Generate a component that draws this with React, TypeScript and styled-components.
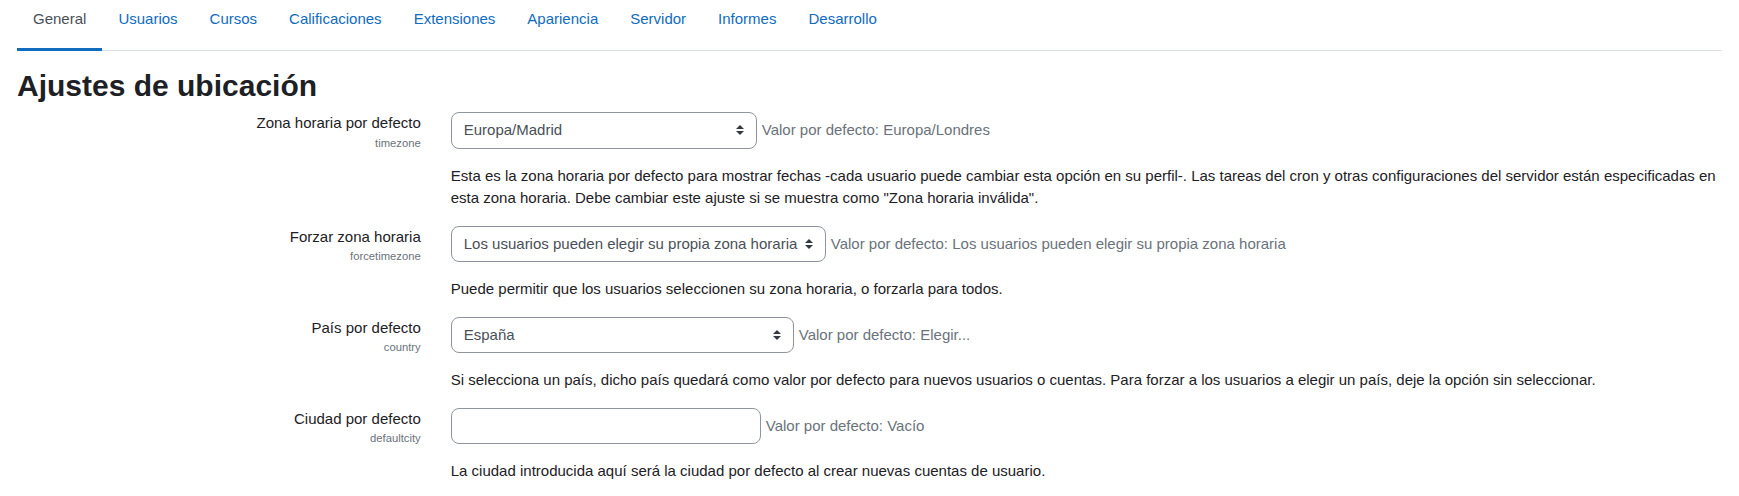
import React from "react";
import styled, { createGlobalStyle } from "styled-components";

const GlobalStyle = createGlobalStyle`
  html, body { margin: 0; padding: 0; background: #fff; }
  body {
    font-family: "Liberation Sans", Arial, sans-serif;
    font-size: 15px;
    line-height: 1.5;
    color: #1d2125;
  }
  * { box-sizing: border-box; }
`;

const Page = styled.div`
  padding: 0 17px;
`;

const Tabs = styled.nav`
  display: flex;
  border-bottom: 1px solid #dee2e6;
  height: 51px;
`;

const Tab = styled.a<{ $active?: boolean }>`
  display: block;
  height: 51px;
  margin-bottom: -1px;
  padding: 8px 16px 0;
  font-size: 15px;
  line-height: 22.5px;
  text-decoration: none;
  color: ${(p) => (p.$active ? "#495057" : "#0f6cbf")};
  border-bottom: 3px solid ${(p) => (p.$active ? "#0f6cbf" : "transparent")};
  cursor: pointer;
`;

const Heading = styled.h2`
  margin: 17px 0 8px;
  font-size: 30px;
  line-height: 1.2;
  font-weight: 700;
  color: #1d2125;
`;

const FormItem = styled.div`
  display: grid;
  grid-template-columns: 25% 75%;
  margin: 0 -15px 16px;
`;

const LabelCol = styled.div`
  padding: 0 15px;
  text-align: right;
`;

const LabelText = styled.label`
  display: block;
  font-size: 15px;
  line-height: 22.5px;
  color: #1d2125;
`;

const ShortName = styled.span`
  display: block;
  font-size: 11.25px;
  line-height: 16.9px;
  color: #6a737b;
`;

const SettingCol = styled.div`
  padding: 0 15px;
`;

const ControlLine = styled.div`
  display: flex;
  align-items: center;
  gap: 5px;
`;

const SelectBox = styled.div<{ $w: number }>`
  display: flex;
  align-items: center;
  justify-content: space-between;
  width: ${(p) => p.$w}px;
  height: 36.5px;
  padding: 0 12px 0 12px;
  border: 1px solid #8f959e;
  border-radius: 8px;
  background: #fff;
  color: #495057;
  font-size: 15px;
  line-height: 22.5px;
  white-space: nowrap;
`;

const TextInput = styled.input<{ $w: number }>`
  width: ${(p) => p.$w}px;
  height: 36.5px;
  padding: 6px 12px;
  border: 1px solid #8f959e;
  border-radius: 8px;
  background: #fff;
  color: #495057;
  font-family: "Liberation Sans", Arial, sans-serif;
  font-size: 15px;
  outline: none;
`;

const DefaultInfo = styled.span`
  color: #6a737b;
  font-size: 15px;
  line-height: 22.5px;
`;

const Description = styled.div`
  margin-top: 16px;
  font-size: 15px;
  line-height: 22.5px;
  color: #1d2125;
`;

const Arrows = () => (
  <svg width="8" height="10" viewBox="0 0 4 5" style={{ flexShrink: 0 }}>
    <path d="M2 0L0 2h4zm0 5L0 3h4z" fill="#343a40" />
  </svg>
);

type Setting = {
  label: string;
  name: string;
  value?: string;
  width: number;
  isInput?: boolean;
  def: string;
  desc: string;
};

const settings: Setting[] = [
  {
    label: "Zona horaria por defecto",
    name: "timezone",
    value: "Europa/Madrid",
    width: 306,
    def: "Valor por defecto: Europa/Londres",
    desc:
      'Esta es la zona horaria por defecto para mostrar fechas -cada usuario puede cambiar esta opción en su perfil-. Las tareas del cron y otras configuraciones del servidor están especificadas en esta zona horaria. Debe cambiar este ajuste si se muestra como "Zona horaria inválida".',
  },
  {
    label: "Forzar zona horaria",
    name: "forcetimezone",
    value: "Los usuarios pueden elegir su propia zona horaria",
    width: 375,
    def: "Valor por defecto: Los usuarios pueden elegir su propia zona horaria",
    desc: "Puede permitir que los usuarios seleccionen su zona horaria, o forzarla para todos.",
  },
  {
    label: "País por defecto",
    name: "country",
    value: "España",
    width: 343,
    def: "Valor por defecto: Elegir...",
    desc:
      "Si selecciona un país, dicho país quedará como valor por defecto para nuevos usuarios o cuentas. Para forzar a los usuarios a elegir un país, deje la opción sin seleccionar.",
  },
  {
    label: "Ciudad por defecto",
    name: "defaultcity",
    width: 310,
    isInput: true,
    def: "Valor por defecto: Vacío",
    desc: "La ciudad introducida aquí será la ciudad por defecto al crear nuevas cuentas de usuario.",
  },
];

const tabs = [
  "General",
  "Usuarios",
  "Cursos",
  "Calificaciones",
  "Extensiones",
  "Apariencia",
  "Servidor",
  "Informes",
  "Desarrollo",
];

export default function App() {
  return (
    <>
      <GlobalStyle />
      <Page>
        <Tabs>
          {tabs.map((t, i) => (
            <Tab key={t} $active={i === 0}>
              {t}
            </Tab>
          ))}
        </Tabs>
        <Heading>Ajustes de ubicación</Heading>
        {settings.map((s) => (
          <FormItem key={s.name}>
            <LabelCol>
              <LabelText>{s.label}</LabelText>
              <ShortName>{s.name}</ShortName>
            </LabelCol>
            <SettingCol>
              <ControlLine>
                {s.isInput ? (
                  <TextInput $w={s.width} type="text" defaultValue="" />
                ) : (
                  <SelectBox $w={s.width}>
                    <span>{s.value}</span>
                    <Arrows />
                  </SelectBox>
                )}
                <DefaultInfo>{s.def}</DefaultInfo>
              </ControlLine>
              <Description>{s.desc}</Description>
            </SettingCol>
          </FormItem>
        ))}
      </Page>
    </>
  );
}
